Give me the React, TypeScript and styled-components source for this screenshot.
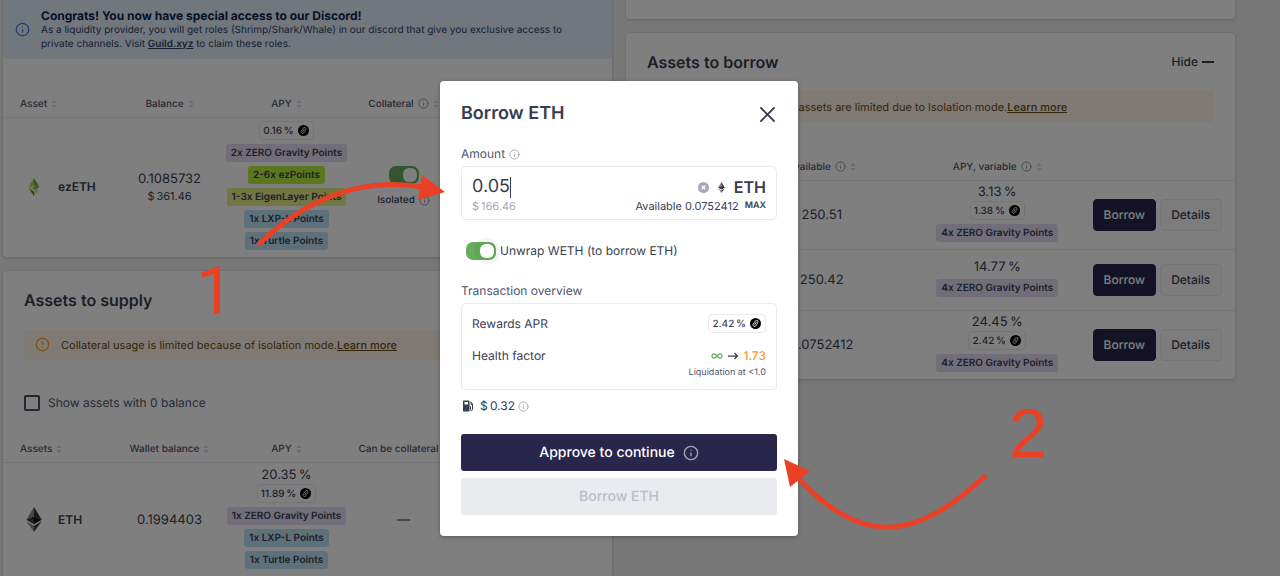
import React from "react";
import styled, { createGlobalStyle } from "styled-components";
import { AlertCircle, Info } from "lucide-react";

const GlobalStyle = createGlobalStyle`
  *, *::before, *::after { box-sizing: border-box; }
  body {
    margin: 0;
    background: #f1f1f1;
    color: #383d51;
    font-family: Inter, "Liberation Sans", sans-serif;
    font-size: 12px;
    line-height: 16px;
    text-rendering: geometricPrecision;
  }
  button, input { font: inherit; color: inherit; text-rendering: inherit; }
`;

const Screen = styled.div`
  position: relative;
  height: 100vh;
  overflow: hidden;
`;

const Dashboard = styled.main`
  display: grid;
  grid-template-columns: 1fr 1fr;
  align-items: start;
  gap: 14px;
  padding: 0 45px 0 3px;
`;

const Column = styled.div`
  display: flex;
  flex-direction: column;
  gap: 14px;
  min-width: 0;
`;

const Card = styled.section<{ $cut?: boolean }>`
  background: #fff;
  border-radius: ${(p) => (p.$cut ? "0 0 4px 4px" : "4px")};
  box-shadow: 0 0 2px rgba(0, 0, 0, 0.22), 0 2px 4px rgba(0, 0, 0, 0.08);
`;

const EmptyCard = styled(Card)`
  height: 19px;
`;

const Banner = styled.div`
  display: flex;
  align-items: center;
  gap: 11px;
  padding: 8px 20px 8px 12px;
  border-radius: 0 0 4px 4px;
  background: #e5eefd;
  color: #2c4268;
  font-size: 10px;
  line-height: 14px;
  svg { flex: none; color: #3c7be0; }
  a { color: inherit; font-weight: 600; }
`;

const BannerTitle = styled.strong`
  display: block;
  font-size: 12px;
  line-height: 15px;
  color: #0a2450;
`;

const CardHeader = styled.header`
  display: flex;
  align-items: center;
  justify-content: space-between;
  padding: 19px 21px;
`;

const CardTitle = styled.h2`
  margin: 0;
  font-size: 16px;
  line-height: 20px;
  font-weight: 600;
`;

const HideButton = styled.button`
  display: flex;
  align-items: center;
  gap: 4px;
  padding: 0;
  border: 0;
  background: none;
  font-weight: 500;
`;

const Dash = styled.span`
  width: 12px;
  height: 2px;
  background: currentColor;
`;

const Warning = styled.div`
  display: flex;
  align-items: center;
  gap: 11px;
  height: 31px;
  margin: 0 21px;
  padding: 0 11px;
  border-radius: 4px;
  background: #fef5e8;
  color: #6b4a14;
  font-size: 11px;
  white-space: nowrap;
  svg { flex: none; color: #f89f1a; }
  a { color: inherit; font-weight: 500; }
`;

const CheckRow = styled.label`
  display: flex;
  align-items: center;
  gap: 8px;
  margin: 35px 21px 0;
  color: #50556c;
`;

const CheckBox = styled.input`
  appearance: none;
  width: 16px;
  height: 16px;
  margin: 0;
  border: 2px solid #4a4f68;
  border-radius: 2px;
`;

const Table = styled.table`
  width: 100%;
  margin-top: 32px;
  border-collapse: collapse;
  table-layout: fixed;
`;

const SupplyTable = styled(Table)`
  margin-top: 25px;
`;

const AssetCol = styled.col`
  width: 108px;
`;

const ActionCol = styled.col`
  width: 150px;
`;

const Th = styled.th<{ $first?: boolean }>`
  height: 26px;
  padding: ${(p) => (p.$first ? "0 0 0 17px" : "0")};
  border-bottom: 1px solid #eaebef;
  color: #50556c;
  font-size: 10px;
  font-weight: 500;
  white-space: nowrap;
`;

const ThInner = styled.span<{ $first?: boolean }>`
  display: flex;
  align-items: center;
  justify-content: ${(p) => (p.$first ? "flex-start" : "center")};
  gap: 4px;
  svg { color: #8e92a3; flex: none; }
`;

const Row = styled.tr<{ $height: number }>`
  height: ${(p) => p.$height}px;
  &:not(:last-child) { border-bottom: 1px solid #eaebef; }
`;

const Td = styled.td`
  padding: 0;
  text-align: center;
  font-size: 13px;
`;

const RateCell = styled(Td)`
  padding-bottom: 3px;
`;

const AssetName = styled.span`
  display: flex;
  align-items: center;
  gap: 12px;
  padding-left: 19px;
  font-size: 12px;
  font-weight: 600;
  svg { width: 24px; flex: none; }
`;

const Stack = styled.div<{ $gap?: number }>`
  display: flex;
  flex-direction: column;
  align-items: center;
  gap: ${(p) => p.$gap ?? 4}px;
`;

const SubValue = styled.span`
  font-size: 11px;
`;

const RateBox = styled.span`
  display: inline-flex;
  align-items: center;
  gap: 4px;
  height: 19px;
  padding: 0 4px 0 3px;
  border: 1px solid #eaebef;
  border-radius: 4px;
  font-size: 10px;
  font-weight: 500;
  line-height: 14px;
`;

const badgeTones = {
  violet: "#e3dcf3",
  lime: "#b5ef3c",
  olive: "#e3ec86",
  sky: "#bde3f5",
};

const Badge = styled.span<{ $tone: keyof typeof badgeTones }>`
  height: 18px;
  padding: 0 5px;
  border-radius: 3px;
  background: ${(p) => badgeTones[p.$tone]};
  font-size: 10px;
  font-weight: 600;
  line-height: 18px;
  white-space: nowrap;
`;

const Isolated = styled.span`
  display: flex;
  align-items: center;
  gap: 4px;
  font-size: 10px;
  font-weight: 500;
  svg { color: #8e92a3; }
`;

const Actions = styled.div`
  display: flex;
  gap: 4px;
  padding: 0 13px 0 8px;
`;

const ActionButton = styled.button<{ $primary?: boolean }>`
  flex: 1;
  height: 32px;
  padding: 0;
  border: 1px solid ${(p) => (p.$primary ? "#28264b" : "#eaebef")};
  border-radius: 4px;
  background: ${(p) => (p.$primary ? "#28264b" : "#f9f9fb")};
  color: ${(p) => (p.$primary ? "#fff" : "inherit")};
  font-size: 12px;
  font-weight: 500;
`;

const Switch = styled.input`
  appearance: none;
  display: flex;
  justify-content: flex-end;
  width: 30px;
  height: 18px;
  margin: 0;
  padding: 2px;
  border-radius: 7px;
  background: #65ad5b;
  &::before {
    content: "";
    width: 14px;
    height: 14px;
    border-radius: 6px;
    background: #fff;
  }
`;

const HaloSwitch = styled(Switch)`
  &::before { box-shadow: 0 0 0 6px rgba(0, 0, 0, 0.04); }
`;

const Backdrop = styled.div`
  position: absolute;
  inset: 0;
  display: flex;
  align-items: center;
  justify-content: center;
  padding: 41px 42px 0 0;
  background: rgba(0, 0, 0, 0.5);
`;

const Dialog = styled.div`
  display: flex;
  flex-direction: column;
  width: 358px;
  padding: 21px;
  border-radius: 4px;
  background: #fff;
  box-shadow: 0 1px 4px rgba(0, 0, 0, 0.3);
`;

const DialogHeader = styled.header`
  display: flex;
  align-items: center;
  justify-content: space-between;
  height: 24px;
`;

const DialogTitle = styled.h1`
  margin: 0;
  font-size: 18px;
  line-height: 24px;
  font-weight: 600;
`;

const CloseButton = styled.button`
  display: flex;
  padding: 0 2px;
  border: 0;
  background: none;
`;

const FieldLabel = styled.label`
  display: flex;
  align-items: center;
  gap: 4px;
  margin: 20px 0 4px;
  color: #50556c;
  svg { color: #a5a8b6; }
`;

const AmountBox = styled.div`
  display: flex;
  flex-direction: column;
  height: 54px;
  padding: 9px 10px 0;
  border: 1px solid #eaebef;
  border-radius: 5px;
`;

const Line = styled.div`
  display: flex;
  align-items: center;
  justify-content: space-between;
`;

const Group = styled.div<{ $gap: number }>`
  display: flex;
  align-items: center;
  gap: ${(p) => p.$gap}px;
`;

const AmountInput = styled.input`
  field-sizing: content;
  padding: 0;
  border: 0;
  outline: 0;
  background: none;
  font-size: 18px;
  line-height: 22px;
`;

const Caret = styled.span`
  width: 1px;
  height: 21px;
  background: #383d51;
`;

const TokenSymbol = styled.span`
  font-size: 16px;
  line-height: 22px;
  font-weight: 600;
`;

const FiatValue = styled.span`
  color: #a5a8b6;
  font-size: 11px;
`;

const Available = styled.span`
  font-size: 11px;
`;

const PlainButton = styled.button`
  display: flex;
  padding: 0;
  border: 0;
  background: none;
  font-size: 9px;
  font-weight: 600;
  line-height: 16px;
`;

const SwitchRow = styled.label`
  display: flex;
  align-items: center;
  gap: 4px;
  height: 18px;
  margin: 22px 0 0 5px;
  font-size: 12px;
`;

const SectionLabel = styled.h2`
  margin: 23px 0 4px;
  color: #50556c;
  font-size: 12px;
  font-weight: 400;
`;

const Overview = styled.div`
  display: flex;
  flex-direction: column;
  height: 87px;
  padding: 10px 10px 0;
  border: 1px solid #eaebef;
  border-radius: 4px;
`;

const Health = styled(Line)`
  margin-top: 15px;
`;

const Arrow = styled.svg`
  width: 12px;
  height: 12px;
`;

const Warn = styled.span`
  color: #f09b2d;
  font-weight: 500;
`;

const Note = styled.span`
  align-self: flex-end;
  margin-top: 2px;
  color: #50556c;
  font-size: 9px;
  line-height: 14px;
`;

const Gas = styled(Group)`
  margin: 8px 0 20px;
  padding-left: 2px;
`;

const MutedInfo = styled(Info)`
  color: #a5a8b6;
`;

const WideButton = styled.button<{ $off?: boolean }>`
  display: flex;
  align-items: center;
  justify-content: center;
  gap: 8px;
  height: 37px;
  margin-top: ${(p) => (p.$off ? "7px" : "0")};
  padding: 0;
  border: 0;
  border-radius: 3px;
  background: ${(p) => (p.$off ? "#eaebef" : "#28264b")};
  color: ${(p) => (p.$off ? "#bbbecb" : "#fff")};
  font-size: 14px;
  font-weight: 500;
`;

const Annotations = styled.svg`
  position: absolute;
  top: 0;
  left: 0;
  width: 1280px;
  height: 576px;
  pointer-events: none;
  text {
    font-family: "Liberation Sans", Arial, sans-serif;
    font-size: 69px;
  }
  text:first-of-type {
    font-family: Roboto, sans-serif;
    font-size: 67px;
  }
`;

function Sorter() {
  return (
    <svg width="6" height="8" viewBox="0 0 6 8" aria-hidden="true">
      <path d="M3 0 6 3H0ZM3 8 6 5H0Z" fill="#d9dae0" />
    </svg>
  );
}

function ZeroLogo() {
  return (
    <svg width="11" height="11" viewBox="0 0 22 22" aria-hidden="true">
      <circle cx="11" cy="11" r="11" fill="#000" />
      <g fill="none" stroke="#fff" strokeWidth="1.5" strokeLinecap="round">
        <rect x="8" y="4.5" width="6" height="13" rx="3" transform="rotate(32 11 11)" />
        <path d="M9.500 13.500 12.500 8.500" />
      </g>
    </svg>
  );
}

function Diamond({ size, green }: { size: number; green?: boolean }) {
  const c = green
    ? ["#a8d35e", "#6fa53a", "#d0e39a", "#8bbd4c", "#5c8f31", "#c8e08c"]
    : ["#8c8c8c", "#343434", "#393939", "#141414", "#8c8c8c", "#3c3c3b"];
  return (
    <svg height={size} viewBox="0 0 256 417" aria-hidden="true">
      <path fill={c[0]} d="M128 0 0 212 128 154Z" />
      <path fill={c[1]} d="M128 0 256 212 128 154Z" />
      <path fill={c[2]} d="M0 212 128 288V154Z" />
      <path fill={c[3]} d="M256 212 128 288V154Z" />
      <path fill={c[4]} d="M0 237 128 417V312Z" />
      <path fill={c[5]} d="M256 237 128 417V312Z" />
    </svg>
  );
}

function GasIcon() {
  return (
    <svg width="11" height="12" viewBox="0 0 22 24" aria-hidden="true">
      <path
        fill="#383d51"
        fillRule="evenodd"
        d="M2 1h9a2 2 0 0 1 2 2v20H0V3a2 2 0 0 1 2-2Zm1 3v5h7V4Z"
      />
      <path
        d="M13 13h2v6a2 2 0 0 0 4 0V8l-4-5M16 5v4h3"
        fill="none"
        stroke="#383d51"
        strokeWidth="2"
      />
    </svg>
  );
}

function ClearIcon() {
  return (
    <svg width="11" height="11" viewBox="0 0 22 22" aria-hidden="true">
      <circle cx="11" cy="11" r="11" fill="#a5a8b6" />
      <path d="M7.500 7.500l7 7m0-7-7 7" stroke="#fff" strokeWidth="2.500" />
    </svg>
  );
}

function CloseIcon() {
  return (
    <svg width="15" height="15" viewBox="0 0 15 15" aria-hidden="true">
      <path d="M1 1l13 13M14 1 1 14" stroke="currentColor" strokeWidth="1.800" strokeLinecap="round" />
    </svg>
  );
}

const percent = (value: string) => `${value}\u2009%`;
const dollars = (value: string) => `$\u2009${value}`;

function Rate({ value }: { value: string }) {
  return (
    <RateBox>
      {percent(value)}
      <ZeroLogo />
    </RateBox>
  );
}

function HeadCell({ label, first, info }: { label: string; first?: boolean; info?: boolean }) {
  return (
    <Th $first={first} scope="col">
      <ThInner $first={first}>
        {label}
        {info && <Info size={11} />}
        <Sorter />
      </ThInner>
    </Th>
  );
}

const borrowRows = [
  { asset: "USDC", available: "250.51", apy: "3.13", reward: "1.38", height: 69 },
  { asset: "USDT", available: "250.42", apy: "14.77", height: 61 },
  { asset: "ETH", available: "0.0752412", apy: "24.45", reward: "2.42", height: 69 },
];

function Supplies() {
  return (
    <Card $cut>
      <Banner>
        <Info size={15} />
        <div>
          <BannerTitle>Congrats! You now have special access to our Discord!</BannerTitle>
          As a liquidity provider, you will get roles (Shrimp/Shark/Whale) in our discord that give
          you exclusive access to
          <br />
          private channels. Visit <a href="#guild">Guild.xyz</a> to claim these roles.
        </div>
      </Banner>
      <Table>
        <colgroup>
          <AssetCol />
          <col />
          <col />
          <col />
          <ActionCol />
        </colgroup>
        <thead>
          <tr>
            <HeadCell label="Asset" first />
            <HeadCell label="Balance" />
            <HeadCell label="APY" />
            <HeadCell label="Collateral" info />
            <Th />
          </tr>
        </thead>
        <tbody>
          <Row $height={140}>
            <Td>
              <AssetName>
                <Diamond size={18} green />
                ezETH
              </AssetName>
            </Td>
            <Td>
              <Stack $gap={1}>
                <span>0.1085732</span>
                <SubValue>{dollars("361.46")}</SubValue>
              </Stack>
            </Td>
            <RateCell>
              <Stack>
                <Rate value="0.16" />
                <Badge $tone="violet">2x ZERO Gravity Points</Badge>
                <Badge $tone="lime">2-6x ezPoints</Badge>
                <Badge $tone="olive">1-3x EigenLayer Points</Badge>
                <Badge $tone="sky">1x LXP-L Points</Badge>
                <Badge $tone="sky">1x Turtle Points</Badge>
              </Stack>
            </RateCell>
            <Td>
              <Stack $gap={8}>
                <Switch
                  type="checkbox"
                  role="switch"
                  defaultChecked
                  aria-label="Use ezETH as collateral"
                />
                <Isolated>
                  Isolated <Info size={11} />
                </Isolated>
              </Stack>
            </Td>
            <Td />
          </Row>
        </tbody>
      </Table>
    </Card>
  );
}

function AssetsToSupply() {
  return (
    <Card>
      <CardHeader>
        <CardTitle>Assets to supply</CardTitle>
      </CardHeader>
      <Warning>
        <AlertCircle size={15} />
        <span>
          Collateral usage is limited because of isolation mode.<a href="#isolation">Learn more</a>
        </span>
      </Warning>
      <CheckRow>
        <CheckBox type="checkbox" />
        Show assets with 0 balance
      </CheckRow>
      <SupplyTable>
        <colgroup>
          <AssetCol />
          <col />
          <col />
          <col />
          <ActionCol />
        </colgroup>
        <thead>
          <tr>
            <HeadCell label="Assets" first />
            <HeadCell label="Wallet balance" />
            <HeadCell label="APY" />
            <HeadCell label="Can be collateral" />
            <Th />
          </tr>
        </thead>
        <tbody>
          <Row $height={115}>
            <Td>
              <AssetName>
                <Diamond size={25} />
                ETH
              </AssetName>
            </Td>
            <Td>0.1994403</Td>
            <RateCell>
              <Stack>
                <Stack $gap={1}>
                  <span>{percent("20.35")}</span>
                  <Rate value="11.89" />
                </Stack>
                <Badge $tone="violet">1x ZERO Gravity Points</Badge>
                <Badge $tone="sky">1x LXP-L Points</Badge>
                <Badge $tone="sky">1x Turtle Points</Badge>
              </Stack>
            </RateCell>
            <Td>—</Td>
            <Td />
          </Row>
        </tbody>
      </SupplyTable>
    </Card>
  );
}

function AssetsToBorrow() {
  return (
    <Card>
      <CardHeader>
        <CardTitle>Assets to borrow</CardTitle>
        <HideButton type="button">
          Hide <Dash />
        </HideButton>
      </CardHeader>
      <Warning>
        <AlertCircle size={15} />
        <span>
          Borrowing power and assets are limited due to Isolation mode.
          <a href="#isolation">Learn more</a>
        </span>
      </Warning>
      <Table>
        <colgroup>
          <AssetCol />
          <col />
          <col />
          <ActionCol />
        </colgroup>
        <thead>
          <tr>
            <HeadCell label="Asset" first />
            <HeadCell label="Available" info />
            <HeadCell label="APY, variable" info />
            <Th />
          </tr>
        </thead>
        <tbody>
          {borrowRows.map((r) => (
            <Row key={r.asset} $height={r.height}>
              <Td />
              <Td>{r.available}</Td>
              <RateCell>
                <Stack>
                  <Stack $gap={1}>
                    <span>{percent(r.apy)}</span>
                    {r.reward && <Rate value={r.reward} />}
                  </Stack>
                  <Badge $tone="violet">4x ZERO Gravity Points</Badge>
                </Stack>
              </RateCell>
              <Td>
                <Actions>
                  <ActionButton type="button" $primary>
                    Borrow
                  </ActionButton>
                  <ActionButton type="button">Details</ActionButton>
                </Actions>
              </Td>
            </Row>
          ))}
        </tbody>
      </Table>
    </Card>
  );
}

function BorrowDialog() {
  return (
    <Dialog role="dialog" aria-labelledby="borrow-title">
      <DialogHeader>
        <DialogTitle id="borrow-title">Borrow ETH</DialogTitle>
        <CloseButton type="button" aria-label="Close">
          <CloseIcon />
        </CloseButton>
      </DialogHeader>
      <FieldLabel htmlFor="amount">
        Amount <Info size={11} />
      </FieldLabel>
      <AmountBox>
        <Line>
          <Group $gap={0}>
            <AmountInput id="amount" defaultValue="0.05" />
            <Caret />
          </Group>
          <Group $gap={9}>
            <PlainButton type="button" aria-label="Clear amount">
              <ClearIcon />
            </PlainButton>
            <Group $gap={9}>
              <Diamond size={11} />
              <TokenSymbol>ETH</TokenSymbol>
            </Group>
          </Group>
        </Line>
        <Line>
          <FiatValue>{dollars("166.46")}</FiatValue>
          <Group $gap={6}>
            <Available>Available 0.0752412</Available>
            <PlainButton type="button">MAX</PlainButton>
          </Group>
        </Line>
      </AmountBox>
      <SwitchRow>
        <HaloSwitch type="checkbox" role="switch" defaultChecked />
        Unwrap WETH (to borrow ETH)
      </SwitchRow>
      <SectionLabel>Transaction overview</SectionLabel>
      <Overview>
        <Line>
          Rewards APR
          <Rate value="2.42" />
        </Line>
        <Health>
          Health factor
          <Group $gap={4}>
            <svg width="12" height="8" viewBox="0 0 24 16" aria-hidden="true">
              <path
                d="M12 8C9 3 2 2 2 8s7 5 10 0 10-6 10 0-7 5-10 0Z"
                fill="none"
                stroke="#56ab4c"
                strokeWidth="2.500"
              />
            </svg>
            <Arrow viewBox="0 0 24 24" aria-hidden="true">
              <path d="M2 12h19M15 6l6 6-6 6" fill="none" stroke="#383d51" strokeWidth="2.500" />
            </Arrow>
            <Warn>1.73</Warn>
          </Group>
        </Health>
        <Note>Liquidation at &lt;1.0</Note>
      </Overview>
      <Gas $gap={6}>
        <GasIcon />
        <Group $gap={3}>
          {dollars("0.32")} <MutedInfo size={11} />
        </Group>
      </Gas>
      <WideButton type="button">
        Approve to continue <MutedInfo size={16} />
      </WideButton>
      <WideButton type="button" disabled $off>
        Borrow ETH
      </WideButton>
    </Dialog>
  );
}

export default function App() {
  return (
    <>
      <GlobalStyle />
      <Screen>
        <Dashboard>
          <Column>
            <Supplies />
            <AssetsToSupply />
          </Column>
          <Column>
            <EmptyCard $cut />
            <AssetsToBorrow />
          </Column>
        </Dashboard>
        <Backdrop>
          <BorrowDialog />
        </Backdrop>
        <Annotations viewBox="0 0 1280 576">
          <g fill="none" stroke="#ea4025" strokeWidth="5">
            <path d="M258 245Q333 172 424 187" />
            <path d="M986 475C915 543 860 545 798 478" />
          </g>
          <g fill="#ea4025">
            <path d="M445 192 422 175 418 200Z" />
            <path d="M784 459 810 471 790 487Z" />
            <text x="196" y="314">1</text>
            <text x="1009" y="457">2</text>
          </g>
        </Annotations>
      </Screen>
    </>
  );
}
